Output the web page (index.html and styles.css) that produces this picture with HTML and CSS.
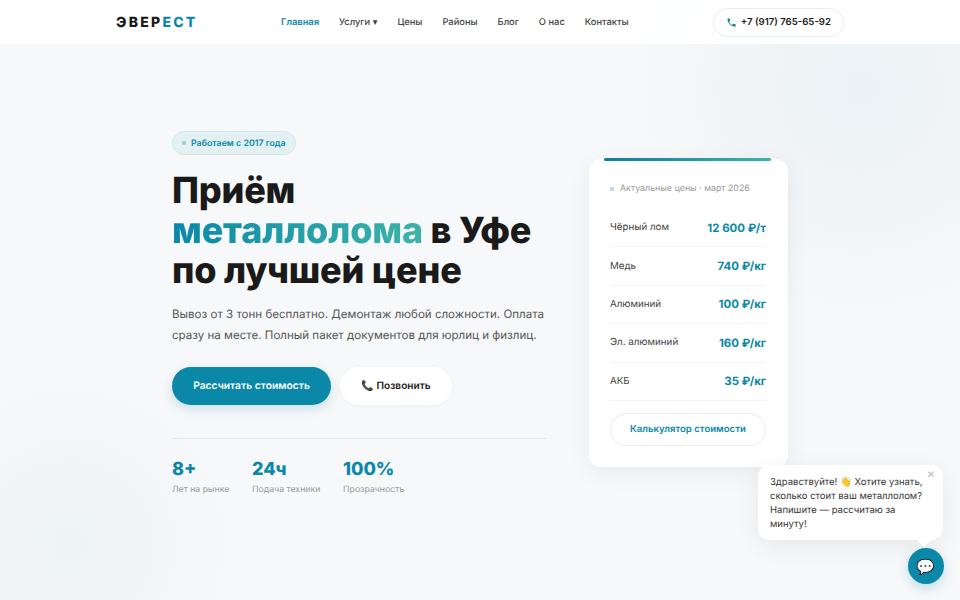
FILE: index.html
```html
<!DOCTYPE html>
<html lang="ru">
<head>
<meta charset="utf-8">
<title>Эверест</title>
<link rel="stylesheet" href="styles.css">
</head>
<body>
<header class="topbar">
  <div class="topbar-inner">
    <a class="logo">ЭВЕР<span>ЕСТ</span></a>
    <nav class="nav">
      <a class="active">Главная</a>
      <a>Услуги ▾</a>
      <a>Цены</a>
      <a>Районы</a>
      <a>Блог</a>
      <a>О нас</a>
      <a>Контакты</a>
    </nav>
    <a class="phone">
      <svg class="phone-icon" viewBox="0 0 24 24" width="11" height="11"><path d="M6.6 10.8a15.1 15.1 0 0 0 6.6 6.6l2.2-2.2a1 1 0 0 1 1-.25 11.4 11.4 0 0 0 3.6.57 1 1 0 0 1 1 1V20a1 1 0 0 1-1 1A17 17 0 0 1 3 4a1 1 0 0 1 1-1h3.5a1 1 0 0 1 1 1c0 1.25.2 2.45.57 3.57a1 1 0 0 1-.25 1z"/></svg>
      +7 (917) 765-65-92
    </a>
  </div>
</header>
<main class="hero">
  <section class="hero-main">
    <div class="badge"><i class="badge-dot"></i>Работаем с 2017 года</div>
    <h1 class="title">Приём<br><span class="grad">металлолома</span> в Уфе<br>по лучшей цене</h1>
    <p class="lead">Вывоз от 3 тонн бесплатно. Демонтаж любой сложности. Оплата сразу на месте. Полный пакет документов для юрлиц и физлиц.</p>
    <div class="actions">
      <a class="btn btn-primary">Рассчитать стоимость</a>
      <a class="btn btn-white">📞 Позвонить</a>
    </div>
    <div class="stats">
      <div class="stat"><b>8+</b><span>Лет на рынке</span></div>
      <div class="stat"><b>24ч</b><span>Подача техники</span></div>
      <div class="stat"><b>100%</b><span>Прозрачность</span></div>
    </div>
  </section>
  <aside class="card">
    <div class="card-head"><i class="card-dot"></i>Актуальные цены · март 2026</div>
    <div class="row"><span>Чёрный лом</span><b>12 600 ₽/т</b></div>
    <div class="row"><span>Медь</span><b>740 ₽/кг</b></div>
    <div class="row"><span>Алюминий</span><b>100 ₽/кг</b></div>
    <div class="row"><span>Эл. алюминий</span><b>160 ₽/кг</b></div>
    <div class="row"><span>АКБ</span><b>35 ₽/кг</b></div>
    <a class="calc">Калькулятор стоимости</a>
  </aside>
</main>
<div class="chat-bubble">
  <span class="chat-close">×</span>
  Здравствуйте! 👋 Хотите узнать, сколько стоит ваш металлолом? Напишите — рассчитаю за минуту!
</div>
<div class="chat-btn">💬</div>
</body>
</html>
```
FILE: styles.css
```css
* { box-sizing: border-box; }
html, body { margin: 0; height: 600px; overflow: hidden; }
body {
  font-family: Inter, "Noto Sans", sans-serif;
  text-rendering: geometricPrecision;
  color: #1a1a1a;
  background:
    radial-gradient(circle 230px at 860px 90px, rgba(10,110,170,.05), transparent),
    radial-gradient(circle 170px at 70px 545px, rgba(10,120,170,.04), transparent),
    #f7f8f9;
}
a { text-decoration: none; color: inherit; }
.topbar { height: 44px; background: rgba(255,255,255,.9); display: flex; justify-content: center; }
.topbar-inner { width: 728px; display: flex; align-items: center; }
.logo { width: 79px; flex: none; padding-top: 1px; font-size: 14px; font-weight: 800; letter-spacing: 2.25px; white-space: nowrap; color: #1a1a1a; }
.logo span { color: #0b88a8; }
.nav { display: flex; gap: 20px; padding-top: 1px; font-size: 9.33px; font-weight: 500; color: #444; margin-left: 86px; }
.nav .active { color: #0b88a8; font-weight: 600; }
.phone { display: flex; align-items: center; gap: 4px; height: 29px; padding: 0 12px; margin-left: auto; border: 1px solid #e8eef0; border-radius: 15px; background: #fff; font-size: 9.6px; font-weight: 600; color: #1a1a1a; }
.phone-icon { fill: #0f8a90; }
.hero { display: flex; gap: 43px; width: 616px; margin: 0 auto; padding-top: 85px; align-items: flex-start; }
.hero-main { width: 374px; flex: none; }
.badge { display: inline-flex; align-items: center; gap: 5px; height: 24px; padding: 0 9px; background: #e3f1f3; border: 1px solid #d3e7ea; border-radius: 12px; font-size: 8.8px; font-weight: 600; color: #0b88a8; }
.badge-dot { width: 4px; height: 4px; border-radius: 50%; background: #8fd0cc; }
.title { margin: 15px 0 0; font-size: 36px; line-height: 40px; font-weight: 800; letter-spacing: -.2px; color: #1a1a1a; }
.grad { background: linear-gradient(90deg, #0b88a8, #3cb4a8); -webkit-background-clip: text; background-clip: text; color: transparent; }
.lead { margin: 13.5px 0 0; font-size: 11.55px; line-height: 21.5px; color: #555; }
.actions { display: flex; gap: 9px; margin-top: 20px; }
.btn { display: flex; align-items: center; justify-content: center; height: 38px; border-radius: 19px; font-weight: 600; }
.btn-primary { width: 159px; font-size: 10.3px; background: #0b88a8; color: #fff; box-shadow: 0 4px 12px rgba(11,136,168,.2); }
.btn-white { width: 112px; font-size: 10.1px; background: #fff; color: #1a1a1a; box-shadow: 0 1px 4px rgba(0,0,0,.04); }
.stats { display: flex; gap: 22.6px; margin-top: 33px; padding-top: 20px; border-top: 1px solid #e4e7e9; }
.stat b { display: block; font-size: 18px; line-height: 22px; font-weight: 800; color: #0b88a8; }
.stat span { display: block; margin-top: 3px; font-size: 8.75px; line-height: 12px; color: #999; }
.card { position: relative; width: 199px; flex: none; margin-top: 30px; padding: 20px 22px 21px 21px; background: #fff; border-radius: 12px; box-shadow: 0 6px 24px rgba(0,0,0,.06); }
.card::before { content: ""; position: absolute; top: -1px; left: 15px; right: 17px; height: 2.5px; border-radius: 2px; background: linear-gradient(90deg, #0b7f9c, #3cb4a8); }
.card-head { display: flex; align-items: center; gap: 6px; height: 19px; font-size: 8.85px; color: #999; margin-bottom: 11px; }
.card-dot { width: 4px; height: 4px; background: #b5e0dc; }
.row { display: flex; align-items: center; justify-content: space-between; height: 38.4px; border-bottom: 1px solid #f1f3f4; font-size: 9.75px; color: #444; }
.row b { font-size: 11.45px; font-weight: 700; color: #0b88a8; }
.calc { display: flex; align-items: center; justify-content: center; height: 33px; margin-top: 12px; border: 1px solid #e8eef0; border-radius: 17px; font-size: 9.6px; font-weight: 600; color: #0b88a8; }
.chat-bubble { position: absolute; left: 758px; top: 465px; width: 185px; padding: 11px 14px 8px 12px; background: #fff; border-radius: 12px; font-size: 9.5px; line-height: 14px; color: #333; box-shadow: 0 6px 24px rgba(0,0,0,.07); }
.chat-bubble::after { content: ""; position: absolute; right: 14px; bottom: -5px; width: 10px; height: 10px; background: #fff; transform: rotate(45deg); }
.chat-close { position: absolute; top: 2px; right: 8px; font-size: 13px; color: #bbb; }
.chat-btn { position: absolute; left: 908px; top: 548px; width: 36px; height: 36px; border-radius: 50%; background: #0b88a8; display: flex; align-items: center; justify-content: center; font-size: 15px; box-shadow: 0 4px 12px rgba(11,136,168,.25); }
```
